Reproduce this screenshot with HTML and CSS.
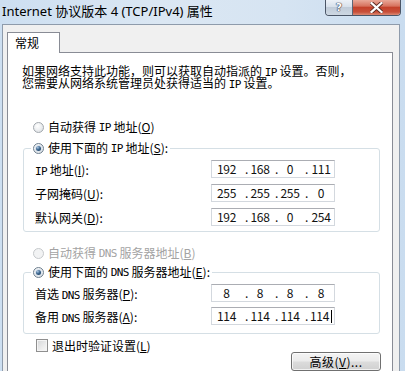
FILE: index.html
```html
<!DOCTYPE html>
<html lang="zh-CN">
<head>
<meta charset="utf-8">
<title>Internet 协议版本 4 (TCP/IPv4) 属性</title>
<link rel="stylesheet" href="styles.css">
</head>
<body>
<div class="window">
  <div class="titlebar">
    <span class="title">Internet 协议版本 4 (TCP/IPv4) 属性</span>
    <div class="caption">
      <div class="cap cap-help"><span class="qmark">?</span></div>
      <div class="cap cap-close">
        <svg width="13" height="11" viewBox="0 0 13 11">
          <path d="M1.5 1 L11.5 10 M11.5 1 L1.5 10" stroke="#5a2a22" stroke-width="4" stroke-linecap="square"/>
          <path d="M1.5 1 L11.5 10 M11.5 1 L1.5 10" stroke="#ffffff" stroke-width="2.2" stroke-linecap="square"/>
        </svg>
      </div>
    </div>
  </div>
  <div class="client">
    <div class="tabstrip"><div class="tab">常规</div></div>
    <div class="page">
      <p class="desc"><span class="line">如果网络支持此功能，则可以获取自动指派的 <span class="a">IP</span> 设置。否则，</span><span class="line">您需要从网络系统管理员处获得适当的 <span class="a">IP</span> 设置。</span></p>

      <div class="opt opt-first"><span class="radio"></span>自动获得 <span class="a">IP</span> 地址(<u>O</u>)</div>

      <fieldset class="group group-ip">
        <legend class="opt"><span class="radio on"></span>使用下面的 <span class="a">IP</span> 地址(<u>S</u>):</legend>
        <div class="row"><span class="lbl"><span class="a">IP</span> 地址(<u>I</u>):</span>
          <div class="ip"><span class="f f1">192</span><span class="d">.</span><span class="f">168</span><span class="d">.</span><span class="f">0</span><span class="d">.</span><span class="f f4">111</span></div>
        </div>
        <div class="row"><span class="lbl">子网掩码(<u>U</u>):</span>
          <div class="ip"><span class="f f1">255</span><span class="d">.</span><span class="f">255</span><span class="d">.</span><span class="f">255</span><span class="d">.</span><span class="f f4">0</span></div>
        </div>
        <div class="row"><span class="lbl">默认网关(<u>D</u>):</span>
          <div class="ip"><span class="f f1">192</span><span class="d">.</span><span class="f">168</span><span class="d">.</span><span class="f">0</span><span class="d">.</span><span class="f f4">254</span></div>
        </div>
      </fieldset>

      <div class="opt opt-dns disabled"><span class="radio"></span>自动获得 <span class="a">DNS</span> 服务器地址(<u>B</u>)</div>

      <fieldset class="group group-dns">
        <legend class="opt"><span class="radio on"></span>使用下面的 <span class="a">DNS</span> 服务器地址(<u>E</u>):</legend>
        <div class="row"><span class="lbl">首选 <span class="a">DNS</span> 服务器(<u>P</u>):</span>
          <div class="ip"><span class="f f1">8</span><span class="d">.</span><span class="f">8</span><span class="d">.</span><span class="f">8</span><span class="d">.</span><span class="f f4">8</span></div>
        </div>
        <div class="row"><span class="lbl">备用 <span class="a">DNS</span> 服务器(<u>A</u>):</span>
          <div class="ip"><span class="f f1">114</span><span class="d">.</span><span class="f">114</span><span class="d">.</span><span class="f">114</span><span class="d">.</span><span class="f f4">114<span class="caret"></span></span></div>
        </div>
      </fieldset>

      <div class="check"><span class="box"></span>退出时验证设置(<u>L</u>)</div>
      <div class="actions"><button class="btn">高级(<u>V</u>)...</button></div>
    </div>
  </div>
</div>
</body>
</html>
```

FILE: styles.css
```css
html, body {
  margin: 0;
  padding: 0;
  background: #d3e2f1;
}

.window {
  width: 405px;
  height: 371px;
  overflow: hidden;
  background: linear-gradient(90deg, #cddff1 0%, #dbe7f3 40%, #d6e4f2 70%, #c9dcef 100%);
  padding: 0 5px 0 2px;
  box-sizing: border-box;
  font-family: "Noto Sans CJK SC", sans-serif;
  font-size: 12px;
  color: #000;
}

/* ASCII runs drawn half-width, like the bitmap UI font */
.a {
  font-family: "DejaVu Sans Mono", "Liberation Mono", monospace;
  font-size: 11px;
  letter-spacing: -0.6px;
  line-height: 1;
}

/* ---------- title bar ---------- */
.titlebar {
  height: 24px;
  display: flex;
  align-items: flex-start;
}
.title {
  font-family: "Noto Sans", "Noto Sans CJK SC", sans-serif;
  font-size: 13px;
  line-height: 22px;
  color: #000;
  white-space: nowrap;
}
.caption {
  margin-left: auto;
  margin-right: -1px;
  display: flex;
  border: 1px solid #4a5566;
  border-top: none;
  border-radius: 0 0 4px 4px;
  overflow: hidden;
  box-shadow: 0 0 1px rgba(255,255,255,.8);
}
.cap {
  height: 15px;
  display: flex;
  align-items: center;
  justify-content: center;
}
.cap-help {
  width: 26px;
  border-right: 1px solid #5b6677;
  background: linear-gradient(#edf2f8 0%, #d8e1eb 45%, #c1ccd9 50%, #cdd7e2 100%);
}
.qmark {
  font-family: "DejaVu Sans", sans-serif;
  font-weight: bold;
  font-size: 11px;
  line-height: 11px;
  color: #ffffff;
  text-shadow: 0 0 1px #334, 0 0 1px #334, 0 0 1px #334;
}
.cap-close {
  width: 47px;
  background: linear-gradient(#e9a898 0%, #d7735f 40%, #c4412b 50%, #c8503a 80%, #db8a74 100%);
}

/* ---------- client area ---------- */
.client {
  border-top: 1px solid #8e9bab;
  border-left: 1px solid #8e9bab;
  border-right: 1px solid #8e9bab;
  background: #f0f0f0;
  padding: 7px 6px 0 4px;
  height: 400px;
}
.tabstrip {
  display: flex;
}
.tab {
  position: relative;
  z-index: 1;
  width: 51px;
  height: 20px;
  margin-bottom: -1px;
  border: 1px solid #898c95;
  border-bottom: none;
  background: #ffffff;
  box-sizing: content-box;
  font-size: 12px;
  line-height: 20px;
  text-indent: 7px;
}
.page {
  border: 1px solid #898c95;
  background: #ffffff;
  height: 400px;
}

.desc {
  margin: 12px 0 0 14px;
  font-size: 12px;
  line-height: 12px;
  white-space: nowrap;
}
.desc .line {
  display: block;
  height: 12px;
}

/* ---------- radio / options ---------- */
.opt {
  display: flex;
  align-items: center;
  height: 14px;
  line-height: 14px;
  white-space: pre;
}
.opt-first {
  margin: 31px 0 0 25px;
}
.opt-dns {
  margin: 14px 0 0 25px;
}
.disabled {
  color: #a3a3a3;
}
.radio {
  width: 11px;
  height: 11px;
  border: 1px solid #a2a8ae;
  border-radius: 50%;
  background: radial-gradient(circle at 40% 35%, #ffffff 0%, #eef0f2 45%, #d5d9dd 100%);
  box-sizing: border-box;
  margin-right: 4px;
  display: flex;
  align-items: center;
  justify-content: center;
  flex: none;
}
.disabled .radio {
  border-color: #c6c9cc;
  background: #f2f3f4;
}
.radio.on {
  border-color: #6e7f8f;
}
.radio.on::after {
  content: "";
  width: 5px;
  height: 5px;
  border-radius: 50%;
  background: radial-gradient(circle at 35% 30%, #a9c4e0 0%, #3c6790 45%, #14314f 100%);
  box-shadow: 0 0 0 1px #d8e2ec;
}

/* ---------- group boxes ---------- */
.group {
  margin: 0 12px 0 15px;
  padding: 0 0 5px 0;
  border: 1px solid #d5dfe5;
  border-radius: 3px;
  min-width: 0;
}
.group-ip {
  margin-top: 7px;
}
.group-dns {
  margin-top: 5px;
  padding-bottom: 8px;
}
.group legend {
  margin-left: 7px;
  padding: 0 2px;
}
.row {
  display: flex;
  align-items: center;
  height: 18px;
  padding-left: 11px;
  margin-top: 6px;
}
.group legend + .row {
  margin-top: 5px;
}
.group-dns .row + .row {
  margin-top: 5px;
}
.lbl {
  width: 176px;
  flex: none;
  white-space: pre;
}

/* ---------- IP address box ---------- */
.ip {
  width: 124px;
  height: 18px;
  box-sizing: border-box;
  border: 1px solid #d3d8de;
  border-top-color: #abadb3;
  display: flex;
  align-items: center;
  font-size: 12px;
  letter-spacing: -0.4px;
  line-height: 16px;
  color: #111;
}
.f {
  width: 22px;
  display: flex;
  justify-content: center;
  align-items: center;
}
.f1 {
  width: 29px;
}
.f4 {
  width: 24px;
}
.d {
  width: 8px;
  text-align: right;
  padding-right: 1px;
  box-sizing: border-box;
}
.caret {
  display: inline-block;
  width: 1px;
  height: 13px;
  background: #000;
  margin-left: 2px;
}

/* ---------- checkbox ---------- */
.check {
  display: flex;
  align-items: center;
  height: 14px;
  margin: 4px 0 0 28px;
  white-space: nowrap;
}
.box {
  width: 12px;
  height: 13px;
  box-sizing: border-box;
  border: 1px solid #8f8f8f;
  background: linear-gradient(135deg, #d4d6d8 0%, #ececec 60%, #f8f8f8 100%);
  box-shadow: inset 0 0 0 1px #f4f4f4;
  margin-right: 4px;
  flex: none;
}

/* ---------- button ---------- */
.actions {
  display: flex;
  justify-content: flex-end;
  padding-right: 11px;
}
.btn {
  width: 90px;
  height: 19px;
  padding: 0;
  border: 1px solid #707070;
  border-radius: 3px;
  background: linear-gradient(#f4f4f4 0%, #ebebeb 48%, #dcdcdc 52%, #d0d0d0 100%);
  box-shadow: inset 0 0 0 1px rgba(255,255,255,.7);
  font-family: "Noto Sans CJK SC", sans-serif;
  font-size: 12px;
  line-height: 17px;
  color: #000;
  letter-spacing: 0.5px;
}
```
